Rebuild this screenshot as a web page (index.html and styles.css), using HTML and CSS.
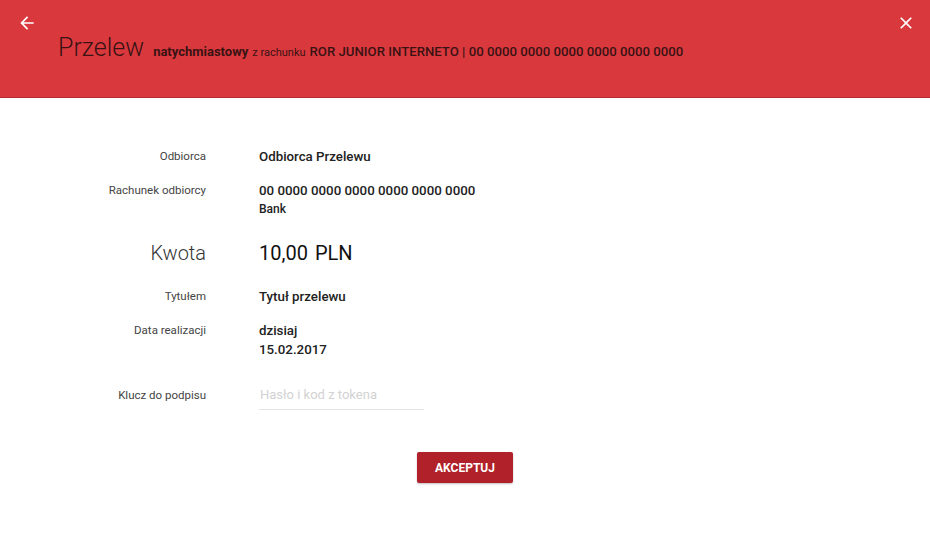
FILE: index.html
```html
<!DOCTYPE html>
<html lang="pl">
<head>
<meta charset="utf-8">
<title>Przelew</title>
<link rel="stylesheet" href="styles.css">
</head>
<body>
<header class="topbar">
  <div class="topbar-icons">
    <svg class="icon" width="20" height="20" viewBox="0 0 24 24"><path d="M20 11H7.83l5.59-5.59L12 4l-8 8 8 8 1.41-1.41L7.83 13H20v-2z" fill="#fff"/></svg>
    <svg class="icon" width="20" height="20" viewBox="0 0 24 24"><path d="M19 6.41L17.59 5 12 10.59 6.41 5 5 6.41 10.59 12 5 17.59 6.41 19 12 13.41 17.59 19 19 17.59 13.41 12z" fill="#fff"/></svg>
  </div>
  <h1 class="title">
    <span class="title-main">Przelew</span>
    <span class="title-type">natychmiastowy</span>
    <span class="title-from">z rachunku</span>
    <span class="title-account">ROR JUNIOR INTERNETO | 00 0000 0000 0000 0000 0000 0000</span>
  </h1>
</header>

<main class="details">
  <div class="row">
    <div class="label">Odbiorca</div>
    <div class="value">Odbiorca Przelewu</div>
  </div>
  <div class="row">
    <div class="label">Rachunek odbiorcy</div>
    <div class="value">00 0000 0000 0000 0000 0000 0000<div class="sub">Bank</div></div>
  </div>
  <div class="row row-amount">
    <div class="label">Kwota</div>
    <div class="value">10,00<span class="currency">PLN</span></div>
  </div>
  <div class="row">
    <div class="label">Tytułem</div>
    <div class="value">Tytuł przelewu</div>
  </div>
  <div class="row">
    <div class="label">Data realizacji</div>
    <div class="value">dzisiaj<br>15.02.2017</div>
  </div>
  <div class="row row-input">
    <div class="label">Klucz do podpisu</div>
    <div class="value"><input class="field" type="password" placeholder="Hasło i kod z tokena"></div>
  </div>
  <div class="actions">
    <button class="btn" type="button">AKCEPTUJ</button>
  </div>
</main>
</body>
</html>
```

FILE: styles.css
```css
* { box-sizing: border-box; }
html, body { margin: 0; padding: 0; background: #fff; }
body {
  font-family: Roboto, "Liberation Sans", sans-serif;
  color: #222;
  width: 930px;
  height: 533px;
  overflow: hidden;
}

.topbar {
  background: #d9393d;
  height: 98px;
  border-bottom: 1px solid #b52d33;
  padding: 13px 14px 0 17px;
}
.topbar-icons {
  display: flex;
  justify-content: space-between;
  height: 20px;
}
.icon { display: block; }

.title {
  margin: 0;
  padding-left: 41px;
  display: flex;
  align-items: baseline;
  font-weight: 400;
  line-height: 30px;
  color: #3a1214;
  white-space: nowrap;
}
.title-main {
  font-size: 25px;
  font-weight: 300;
  margin-right: 9px;
}
.title-type {
  font-size: 13px;
  font-weight: 700;
  margin-right: 4px;
}
.title-from {
  font-size: 11px;
  font-weight: 400;
  margin-right: 4px;
}
.title-account {
  font-size: 13.2px;
  font-weight: 500;
}

.details {
  padding-top: 49px;
}
.row {
  display: grid;
  grid-template-columns: 206px 1fr;
  column-gap: 53px;
  margin-bottom: 15px;
}
.label {
  text-align: right;
  font-size: 11.5px;
  line-height: 19px;
  color: #444;
}
.value {
  font-size: 13.3px;
  font-weight: 500;
  line-height: 19px;
  color: #222;
}
.sub {
  font-size: 12px;
  font-weight: 500;
  line-height: 19px;
}
.row-amount {
  margin-top: 22px;
  margin-bottom: 22px;
  align-items: center;
}
.row-amount .label {
  font-size: 20px;
  font-weight: 300;
  line-height: 24px;
  color: #333;
}
.row-amount .value {
  font-size: 20px;
  font-weight: 400;
  line-height: 24px;
  color: #111;
}
.currency { margin-left: 7px; }

.row-input {
  margin-top: 21px;
  align-items: center;
  margin-bottom: 0;
}
.field {
  display: block;
  width: 165px;
  height: 30px;
  border: 0;
  border-bottom: 1px solid #e4e4e4;
  padding: 0 0 0 1px;
  margin: 0;
  font-family: Roboto, "Liberation Sans", sans-serif;
  font-size: 13px;
  outline: none;
  background: transparent;
}
.field::placeholder { color: #d2d2d2; }

.actions {
  display: flex;
  justify-content: center;
  margin-top: 42px;
}
.btn {
  width: 96px;
  height: 31px;
  border: 0;
  border-radius: 2px;
  background: #b02129;
  color: #fff;
  font-family: Roboto, "Liberation Sans", sans-serif;
  font-size: 12px;
  font-weight: 700;
  box-shadow: 0 1px 2px rgba(0,0,0,0.25);
  padding: 0;
}
```
